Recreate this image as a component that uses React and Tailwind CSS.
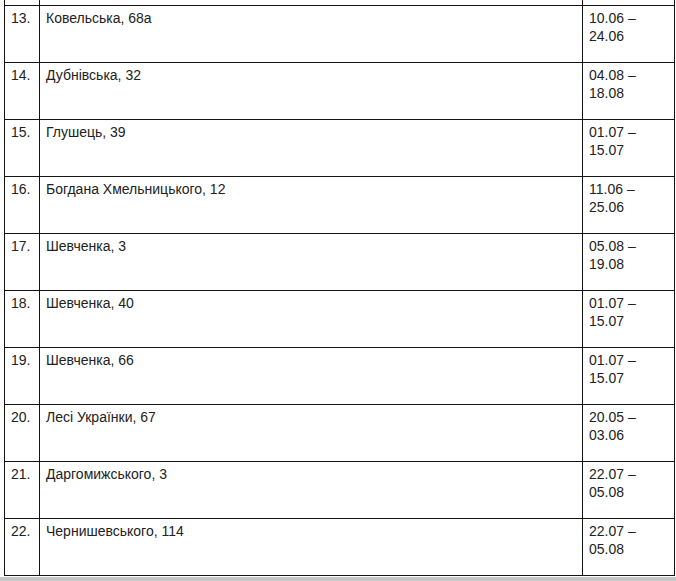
const rows = [
  ['13.', 'Ковельська, 68а', '10.06 –', '24.06'],
  ['14.', 'Дубнівська, 32', '04.08 –', '18.08'],
  ['15.', 'Глушець, 39', '01.07 –', '15.07'],
  ['16.', 'Богдана Хмельницького, 12', '11.06 –', '25.06'],
  ['17.', 'Шевченка, 3', '05.08 –', '19.08'],
  ['18.', 'Шевченка, 40', '01.07 –', '15.07'],
  ['19.', 'Шевченка, 66', '01.07 –', '15.07'],
  ['20.', 'Лесі Українки, 67', '20.05 –', '03.06'],
  ['21.', 'Даргомижського, 3', '22.07 –', '05.08'],
  ['22.', 'Чернишевського, 114', '22.07 –', '05.08'],
];

const cell = 'border border-[#141414] align-top px-[6px] pt-[3px]';

export default function App() {
  return (
    <div className="w-[676px] h-[581px] bg-white overflow-hidden font-['Liberation_Sans',Arial,sans-serif] text-[14px] leading-[18px] text-[#222]">
      <table className="ml-[4px] w-[670px] table-fixed border-collapse">
        <colgroup>
          <col className="w-[35px]" />
          <col className="w-[543px]" />
          <col className="w-[92px]" />
        </colgroup>
        <tbody>
          <tr className="h-[5px]">
            <td className="border-x border-[#141414] p-0" />
            <td className="border-x border-[#141414] p-0" />
            <td className="border-x border-[#141414] p-0" />
          </tr>
          {rows.map(([n, addr, d1, d2]) => (
            <tr key={n} className="h-[57px]">
              <td className={cell}>{n}</td>
              <td className={cell}>{addr}</td>
              <td className={cell}>
                {d1}
                <br />
                {d2}
              </td>
            </tr>
          ))}
        </tbody>
      </table>
      <div className="mt-[1px] h-[10px] bg-[#c6c6c6]" />
    </div>
  );
}
